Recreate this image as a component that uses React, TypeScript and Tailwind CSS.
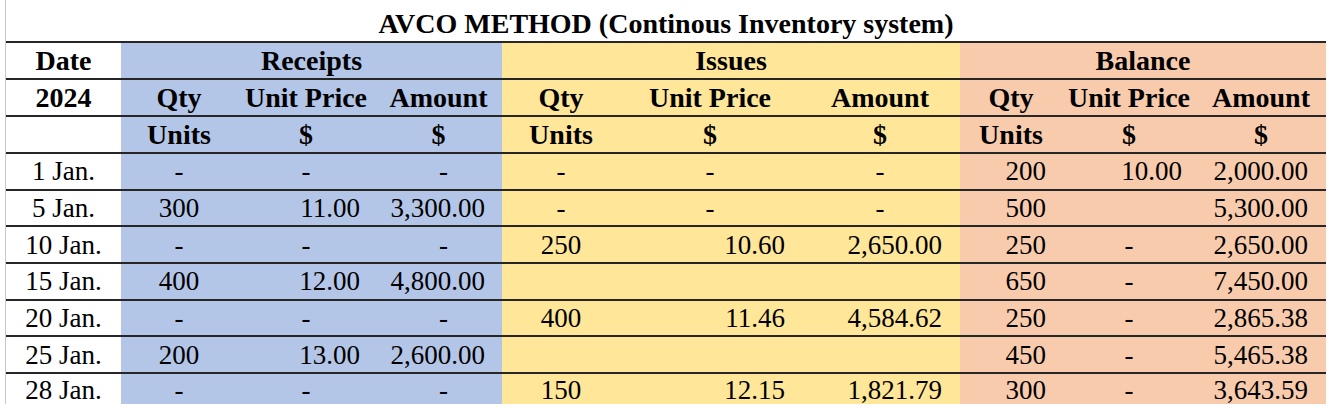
// AVCO inventory ledger, rendered as a flat spreadsheet-style table

const COL_W = [
  "w-[115px]",
  "w-[116px]",
  "w-[138px]",
  "w-[127px]",
  "w-[118px]",
  "w-[180px]",
  "w-[160px]",
  "w-[102px]",
  "w-[134px]",
  "w-[130px]",
];

const COL_BG = [
  "bg-white",
  "bg-[#b4c6e7]",
  "bg-[#b4c6e7]",
  "bg-[#b4c6e7]",
  "bg-[#ffe699]",
  "bg-[#ffe699]",
  "bg-[#ffe699]",
  "bg-[#f8cbad]",
  "bg-[#f8cbad]",
  "bg-[#f8cbad]",
];

// alignment of numbers in each column (accounting-style padding)
const NUM_ALIGN = [
  "justify-center",
  "justify-center",
  "justify-end pr-[15px]",
  "justify-end pr-[17px]",
  "justify-center",
  "justify-end pr-[15px]",
  "justify-end pr-[18px]",
  "justify-end pr-[16px]",
  "justify-end pr-[14px]",
  "justify-end pr-[18px]",
];

const DASH_ALIGN = [
  "justify-center",
  "justify-center",
  "justify-center",
  "justify-center pl-[10px]",
  "justify-center",
  "justify-center",
  "justify-center",
  "justify-center",
  "justify-center",
  "justify-center",
];

const rows: string[][] = [
  ["1 Jan.", "-", "-", "-", "-", "-", "-", "200", "10.00", "2,000.00"],
  ["5 Jan.", "300", "11.00", "3,300.00", "-", "-", "-", "500", "", "5,300.00"],
  ["10 Jan.", "-", "-", "-", "250", "10.60", "2,650.00", "250", "-", "2,650.00"],
  ["15 Jan.", "400", "12.00", "4,800.00", "", "", "", "650", "-", "7,450.00"],
  ["20 Jan.", "-", "-", "-", "400", "11.46", "4,584.62", "250", "-", "2,865.38"],
  ["25 Jan.", "200", "13.00", "2,600.00", "", "", "", "450", "-", "5,465.38"],
  ["28 Jan.", "-", "-", "-", "150", "12.15", "1,821.79", "300", "-", "3,643.59"],
];

const subHead1 = ["2024", "Qty", "Unit Price", "Amount", "Qty", "Unit Price", "Amount", "Qty", "Unit Price", "Amount"];
const subHead2 = ["", "Units", "$", "$", "Units", "$", "$", "Units", "$", "$"];

const HeadRow = ({ cells }: { cells: string[] }) => (
  <div className="flex h-[37px] border-t-2 border-[#262626]">
    {cells.map((c, i) => (
      <div
        key={i}
        className={`${COL_W[i]} ${COL_BG[i]} flex items-center justify-center font-bold text-[28px] leading-[35px] whitespace-nowrap`}
      >
        {c}
      </div>
    ))}
  </div>
);

export default function App() {
  return (
    <div className="bg-white w-[1334px] h-[408px] text-black font-['Liberation_Serif','Times_New_Roman',serif]">
      <div className="ml-[5px] w-[1321px] h-[404px] overflow-hidden border-l border-[#c8c8c8]">
        <div className="w-[1320px]">
          {/* title */}
          <div className="h-[41px] flex justify-center pt-[8px]">
            <span className="font-bold text-[28px] leading-[32px] whitespace-nowrap">
              AVCO METHOD (Continous Inventory system)
            </span>
          </div>

          {/* group header */}
          <div className="flex h-[37px] border-t-2 border-[#262626] font-bold text-[28px] leading-[35px]">
            <div className="w-[115px] bg-white flex items-center justify-center">Date</div>
            <div className="w-[381px] bg-[#b4c6e7] flex items-center justify-center">Receipts</div>
            <div className="w-[458px] bg-[#ffe699] flex items-center justify-center">Issues</div>
            <div className="w-[366px] bg-[#f8cbad] flex items-center justify-center">Balance</div>
          </div>

          <HeadRow cells={subHead1} />
          <HeadRow cells={subHead2} />

          {rows.map((r, ri) => {
            const last = ri === rows.length - 1;
            return (
              <div
                key={ri}
                className={`flex border-t-2 border-[#262626] text-[27px] ${
                  last ? "h-[32px] leading-[27px]" : "h-[36.67px] leading-[34px]"
                }`}
              >
                {r.map((v, i) => (
                  <div
                    key={i}
                    className={`${COL_W[i]} ${COL_BG[i]} flex whitespace-nowrap ${
                      last ? "items-start pt-[3px]" : "items-center"
                    } ${v === "-" ? DASH_ALIGN[i] : NUM_ALIGN[i]}`}
                  >
                    {v}
                  </div>
                ))}
              </div>
            );
          })}
        </div>
      </div>
    </div>
  );
}
